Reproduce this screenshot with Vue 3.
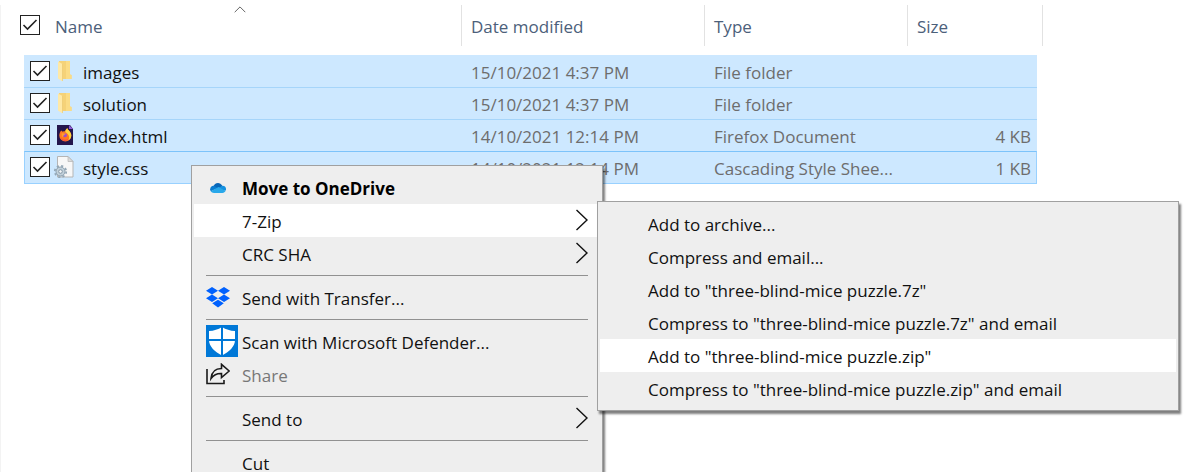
<script setup>
import { ref } from 'vue'

const files = ref([
  { id: 'images', icon: 'folder', name: 'images', date: '15/10/2021 4:37 PM', type: 'File folder', size: '', checked: true },
  { id: 'solution', icon: 'folder', name: 'solution', date: '15/10/2021 4:37 PM', type: 'File folder', size: '', checked: true },
  { id: 'index', icon: 'firefox', name: 'index.html', date: '14/10/2021 12:14 PM', type: 'Firefox Document', size: '4 KB', checked: true },
  { id: 'style', icon: 'css', name: 'style.css', date: '14/10/2021 12:14 PM', type: 'Cascading Style Shee...', size: '1 KB', checked: true, focused: true },
])
const allChecked = ref(true)

const groups = [
  [
    { label: 'Move to OneDrive', icon: 'onedrive', strong: true },
    { label: '7-Zip', sub: true, active: true },
    { label: 'CRC SHA', sub: true },
  ],
  [{ label: 'Send with Transfer...', icon: 'dropbox' }],
  [
    { label: 'Scan with Microsoft Defender...', icon: 'defender' },
    { label: 'Share', icon: 'share', disabled: true },
  ],
  [{ label: 'Send to', sub: true }],
  [{ label: 'Cut' }],
]

const zipItems = [
  { label: 'Add to archive...' },
  { label: 'Compress and email...' },
  { label: 'Add to "three-blind-mice puzzle.7z"' },
  { label: 'Compress to "three-blind-mice puzzle.7z" and email' },
  { label: 'Add to "three-blind-mice puzzle.zip"', active: true },
  { label: 'Compress to "three-blind-mice puzzle.zip" and email' },
]
</script>

<template>
  <main class="explorer">
    <table class="files">
      <colgroup>
        <col class="c-gutter" /><col class="c-name" /><col class="c-date" /><col class="c-type" /><col class="c-size" /><col class="c-end" />
      </colgroup>
      <thead>
        <tr>
          <th colspan="2">
            <div class="head head-name">
              <span class="check">
                <input id="all" v-model="allChecked" type="checkbox" />
                <svg v-if="allChecked" viewBox="0 0 20 20"><path d="M3.500 10l4 4L16.500 5" /></svg>
              </span>
              <label for="all">Name</label>
              <svg class="sort" viewBox="0 0 12 7"><path d="M.7 6.200L6 .9l5.300 5.300" /></svg>
            </div>
          </th>
          <th><div class="head">Date modified</div></th>
          <th><div class="head">Type</div></th>
          <th colspan="2"><div class="head">Size</div></th>
        </tr>
      </thead>
      <tbody>
        <tr v-for="f in files" :key="f.id" :class="{ focused: f.focused }">
          <td class="blank"></td>
          <td class="first">
            <div class="file">
              <span class="check">
                <input :id="f.id" v-model="f.checked" type="checkbox" />
                <svg v-if="f.checked" viewBox="0 0 20 20"><path d="M3.500 10l4 4L16.500 5" /></svg>
              </span>
              <svg v-if="f.icon === 'folder'" class="ficon" viewBox="0 0 24 24">
                <path d="M6 2h11v13.500l1.500.5v4H6z" fill="#f5d278" />
                <path d="M13 2h4v13.500l1.500.5v4H13z" fill="#fbdc85" />
                <path d="M5 2.500L9.500 5v17.500L5 19.500z" fill="#ffe9a6" />
                <path d="M9.500 5v17" stroke="#e9c469" stroke-width=".6" />
              </svg>
              <svg v-else-if="f.icon === 'firefox'" class="ficon" viewBox="0 0 24 24">
                <path d="M4 2h13l3 4v16H4z" fill="#23164d" />
                <path d="M16 2l4 4h-4z" fill="#9059d8" />
                <path d="M8.200 7.400l1.500 1.300c1-.6 2-.5 2.600-.4.200-1.500 1-2.500 2.200-3 0 2 3.800 3.200 3.800 7.200a6 6 0 0 1-12 .1c0-2 .8-3.800 1.900-5.200z" fill="#ff7a20" />
                <path d="M14.500 5.300c0 2 3.800 3.200 3.800 7.200 0 2.200-1.300 4-3 5 1.500-2.500 1-5.500-1-7-1.500-1-2-1.600-2-2.200.2-1.500 1-2.500 2.200-3z" fill="#ffd33c" />
                <path d="M7.300 14.500c2 2.500 5 3 8 1.500-1.500 2.300-5.800 2.800-8-1.500z" fill="#f13a53" />
                <circle cx="12" cy="12.200" r="2" fill="#a04bd0" />
                <path d="M8.500 10.500c1.500-.6 3 .2 4.200 0-.3 1-1.500 1.300-2 1.700-.3.900-1 1.600-1.700 2.100z" fill="#ffa02c" />
              </svg>
              <svg v-else class="ficon" viewBox="0 0 24 24">
                <path d="M4.500 1.500h10.500l5 5v15.500h-15.500z" fill="#f7f7f7" stroke="#b5b5b5" />
                <path d="M15 1.500v5h5z" fill="#dcdcdc" stroke="#b5b5b5" stroke-width=".7" />
                <circle cx="7.500" cy="16.500" r="4.500" fill="#c1d0da" stroke="#8da0af" />
                <circle cx="7.500" cy="16.500" r="5.700" fill="none" stroke="#93a7b6" stroke-width="1.800" stroke-dasharray="2.200 2.270" />
                <circle cx="7.500" cy="16.500" r="1.800" fill="#f4f7f9" stroke="#8497a6" />
              </svg>
              <label :for="f.id">{{ f.name }}</label>
            </div>
          </td>
          <td>{{ f.date }}</td>
          <td>{{ f.type }}</td>
          <td class="size">{{ f.size }}</td>
          <td class="blank"></td>
        </tr>
      </tbody>
    </table>

    <div class="menu context" role="menu">
      <div v-for="(g, gi) in groups" :key="gi" class="group">
        <button v-for="i in g" :key="i.label" type="button" role="menuitem" class="item" :class="{ active: i.active, strong: i.strong }" :disabled="i.disabled">
          <span class="slot">
            <svg v-if="i.icon === 'onedrive'" class="cloud" viewBox="0 0 16 11">
              <path d="M3 5C4.500.8 9.500-1 12.500 4L8 8z" fill="#0766b8" />
              <path d="M3.700 3.800C.8 3.700-.8 7 .8 9.300L8 6z" fill="#0a7cd0" />
              <path d="M8 6l4.700-2.200C15.200 3.800 16.500 6 15.900 8.500L11 9z" fill="#1490df" />
              <path d="M.8 9.300L8.500 5l7 4c-.6 1.200-1.500 1.800-3 1.900H4C2.500 10.900 1.500 10.500.8 9.300z" fill="#28a8ea" />
            </svg>
            <svg v-else-if="i.icon === 'dropbox'" class="box" viewBox="0 0 24 21">
              <path d="M6 0l6 3.700-6 3.800-6-3.800zM18 0l6 3.700-6 3.800-6-3.800zM6 7.500l6 3.800L6 15l-6-3.700zM18 7.500l6 3.800-6 3.700-6-3.700zM12 12.700l5.800 3.600L12 20.500l-5.800-4.200z" fill="#0061fe" />
            </svg>
            <svg v-else-if="i.icon === 'defender'" class="shield" viewBox="0 0 32 32">
              <path d="M0 0h32v32H0z" fill="#0078d7" />
              <path d="M16 2c4 2.500 8 3.800 13 4v9c0 6.500-6 12-13 15.500C9 27 3 21.500 3 15V6c5-.2 9-1.500 13-4z" fill="#fff" />
              <path d="M16 1v30M2 15h28" stroke="#0078d7" stroke-width="2" />
            </svg>
            <svg v-else-if="i.icon === 'share'" class="share" viewBox="0 0 24 22">
              <path d="M1 6v14.500h17V17" />
              <path d="M5 15.500c.6-6 4-10 10.500-10V1.300L23.200 8l-7.700 6.500V10.500C10.500 10.300 7.500 12 5 15.500z" />
            </svg>
          </span>
          <span class="text">{{ i.label }}</span>
          <svg v-if="i.sub" class="arrow" viewBox="0 0 13 22"><path d="M1.500 1l10.500 10L1.500 21" /></svg>
        </button>
      </div>
    </div>

    <div class="menu submenu" role="menu">
      <button v-for="i in zipItems" :key="i.label" type="button" role="menuitem" class="item" :class="{ active: i.active }">
        <span class="slot"></span>
        <span class="text">{{ i.label }}</span>
      </button>
    </div>
  </main>
</template>

<style>
body { margin: 0; background: #fff; }
</style>

<style scoped>
* { box-sizing: border-box; }
.explorer {
  position: relative;
  height: 100vh;
  overflow: hidden;
  padding-top: 5px;
  font: 17px/24px "Open Sans", "Noto Sans", sans-serif;
  color: #6d6d6d;
  background: linear-gradient(#f3f3f3, #f3f3f3) 0 5px / 1px 100% no-repeat #fff;
}
.files { table-layout: fixed; width: 1043px; border-spacing: 0; }
.c-gutter { width: 24px; }
.c-name { width: 438px; }
.c-date { width: 243px; }
.c-type { width: 203px; }
.c-size { width: 129px; }
.c-end { width: 6px; }
th { padding: 0 0 9px; font-weight: 400; text-align: left; color: #4c607a; }
.head {
  position: relative;
  display: flex;
  align-items: center;
  height: 41px;
  padding: 3px 0 0 9px;
  border-right: 1px solid #e2e2e2;
}
.head-name { padding-left: 20px; gap: 15px; }
.head-name .check { margin-bottom: 4px; }
.sort { position: absolute; left: 234px; top: 1px; width: 12px; height: 7px; fill: none; stroke: #666; }
.check { position: relative; flex: none; width: 20px; height: 20px; }
.check input {
  appearance: none;
  display: block;
  width: 20px;
  height: 20px;
  margin: 0;
  border: 1px solid #222;
  background: #fff;
}
.check svg {
  position: absolute;
  inset: 0;
  fill: none;
  stroke: #222;
  stroke-width: 1.6;
  pointer-events: none;
}
td {
  height: 32px;
  padding: 2px 0 0 9px;
  background: #cde8ff;
  border-top: 1px solid #a6d5fa;
  white-space: nowrap;
}
tbody tr:first-child td { border-top-color: #cde8ff; }
.focused td { height: 33px; border-top-color: #7cc3fa; border-bottom: 1px solid #99d1ff; }
.focused .first { border-left: 1px solid #99d1ff; }
.focused .size { border-right: 1px solid #99d1ff; }
td.first { padding: 0 0 1px 6px; color: #111; }
td.size { padding-right: 6px; text-align: right; }
.focused td.first { padding-left: 5px; }
.focused td.size { padding-right: 5px; }
tbody tr td.blank { padding: 0; background: none; border: 0; }
.file { display: flex; align-items: center; }
.file label { padding: 4px 0 0 6px; }
.ficon { width: 24px; height: 24px; margin-left: 3px; }

.menu {
  position: absolute;
  padding: 5px 2px;
  background: #eee;
  border: 1px solid #a0a0a0;
  box-shadow: 2px 3px 2px rgba(0, 0, 0, .5);
}
.context { left: 191px; top: 165px; width: 412px; }
.submenu { left: 597px; top: 201px; width: 582px; }
.group + .group::before {
  content: "";
  display: block;
  height: 1px;
  margin: 5px 12px;
  background: #919191;
}
.item {
  display: flex;
  align-items: center;
  width: 100%;
  height: 33px;
  padding: 0 12px;
  border: 0;
  background: none;
  font: inherit;
  color: #111;
  text-align: left;
  white-space: nowrap;
}
.item.active { background: #fff; }
.item.strong { font-weight: 700; color: #000; }
.item:disabled { color: #777; }
.slot { flex: none; display: flex; align-items: center; width: 36px; }
.item svg { flex: none; margin-bottom: 1px; }
.text { flex: 1; padding-top: 2px; }
.cloud { width: 16px; height: 11px; margin-left: 4px; }
.box { width: 24px; height: 21px; }
.shield { width: 32px; height: 32px; }
.share { width: 24px; height: 22px; fill: none; stroke: #1a1a1a; stroke-width: 1.6; }
.arrow { width: 13px; height: 22px; fill: none; stroke: #111; stroke-width: 1.4; }
</style>
